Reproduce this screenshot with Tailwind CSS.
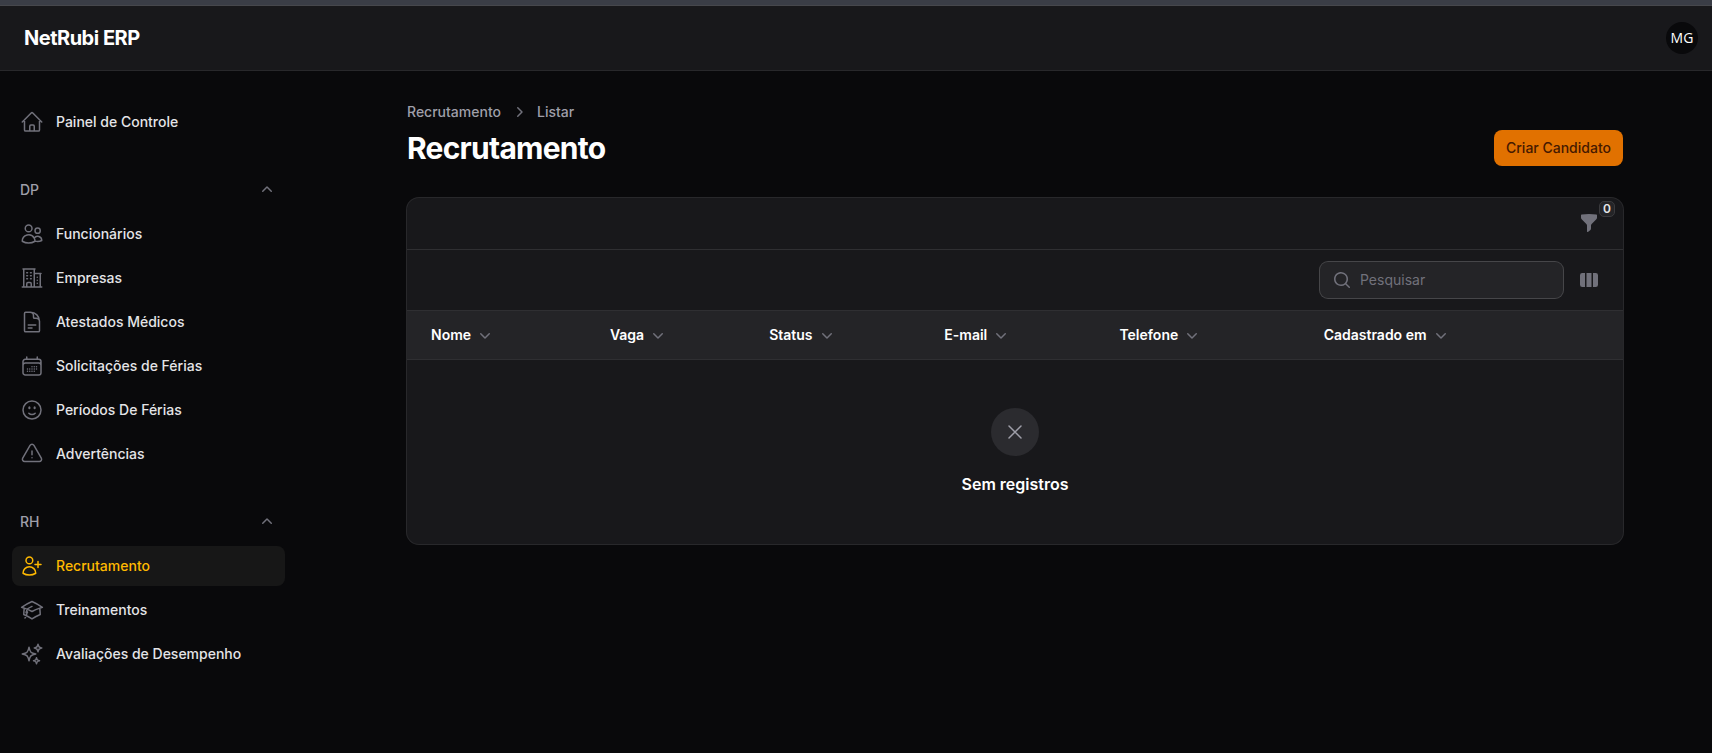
<!DOCTYPE html>
<html lang="pt-BR">
<head>
    <meta charset="UTF-8">
    <meta name="viewport" content="width=device-width, initial-scale=1.0">
    <title>Recrutamento - NetRubi ERP</title>
    <script src="https://cdn.jsdelivr.net/npm/@tailwindcss/browser@4"></script>
</head>
<body class="min-h-screen bg-[#09090b] font-['Inter',sans-serif] text-sm text-white antialiased">

    <!-- Icons -->
    <svg class="hidden">
        <defs>
            <symbol id="i-home" viewBox="0 0 24 24"><path d="m2.25 12 8.954-8.955c.44-.439 1.152-.439 1.591 0L21.75 12M4.5 9.75v10.125c0 .621.504 1.125 1.125 1.125H9.75v-4.875c0-.621.504-1.125 1.125-1.125h2.25c.621 0 1.125.504 1.125 1.125V21h4.125c.621 0 1.125-.504 1.125-1.125V9.75M8.25 21h8.25"/></symbol>
            <symbol id="i-users" viewBox="0 0 24 24"><path d="M15 19.128a9.38 9.38 0 0 0 2.625.372 9.337 9.337 0 0 0 4.121-.952 4.125 4.125 0 0 0-7.533-2.493M15 19.128v-.003c0-1.113-.285-2.16-.786-3.07M15 19.128v.106A12.318 12.318 0 0 1 8.624 21c-2.331 0-4.512-.645-6.374-1.766l-.001-.109a6.375 6.375 0 0 1 11.964-3.07M12 6.375a3.375 3.375 0 1 1-6.75 0 3.375 3.375 0 0 1 6.75 0Zm8.25 2.25a2.625 2.625 0 1 1-5.25 0 2.625 2.625 0 0 1 5.25 0Z"/></symbol>
            <symbol id="i-office" viewBox="0 0 24 24"><path d="M2.25 21h19.5m-18-18v18m10.5-18v18m6-13.5V21M6.75 6.75h.75m-.75 3h.75m-.75 3h.75m3-6h.75m-.75 3h.75m-.75 3h.75M6.75 21v-3.375c0-.621.504-1.125 1.125-1.125h2.25c.621 0 1.125.504 1.125 1.125V21M3 3h12m-.75 4.5H21m-3.75 3.75h.008v.008h-.008v-.008Zm0 3h.008v.008h-.008v-.008Zm0 3h.008v.008h-.008v-.008Z"/></symbol>
            <symbol id="i-document" viewBox="0 0 24 24"><path d="M19.5 14.25v-2.625a3.375 3.375 0 0 0-3.375-3.375h-1.5A1.125 1.125 0 0 1 13.5 7.125v-1.5a3.375 3.375 0 0 0-3.375-3.375H8.25m0 12.75h7.5m-7.5 3H12M10.5 2.25H5.625c-.621 0-1.125.504-1.125 1.125v17.25c0 .621.504 1.125 1.125 1.125h12.75c.621 0 1.125-.504 1.125-1.125V11.25a9 9 0 0 0-9-9Z"/></symbol>
            <symbol id="i-calendar" viewBox="0 0 24 24"><path d="M6.75 3v2.25M17.25 3v2.25M3 18.75V7.5a2.25 2.25 0 0 1 2.25-2.25h13.5A2.25 2.25 0 0 1 21 7.5v11.25m-18 0A2.25 2.25 0 0 0 5.25 21h13.5A2.25 2.25 0 0 0 21 18.75m-18 0v-7.5A2.25 2.25 0 0 1 5.25 9h13.5A2.25 2.25 0 0 1 21 11.25v7.5m-9-6h.008v.008H12v-.008ZM12 15h.008v.008H12V15Zm0 2.25h.008v.008H12v-.008ZM9.75 15h.008v.008H9.75V15Zm0 2.25h.008v.008H9.75v-.008ZM7.5 15h.008v.008H7.5V15Zm0 2.25h.008v.008H7.5v-.008Zm6.75-4.5h.008v.008h-.008v-.008Zm0 2.25h.008v.008h-.008V15Zm0 2.25h.008v.008h-.008v-.008Zm2.25-4.5h.008v.008H16.5v-.008Zm0 2.25h.008v.008H16.5V15Z"/></symbol>
            <symbol id="i-smile" viewBox="0 0 24 24"><path d="M15.182 15.182a4.5 4.5 0 0 1-6.364 0M21 12a9 9 0 1 1-18 0 9 9 0 0 1 18 0ZM9.75 9.75c0 .414-.168.75-.375.75S9 10.164 9 9.75 9.168 9 9.375 9s.375.336.375.75Zm-.375 0h.008v.015h-.008V9.75Zm5.625 0c0 .414-.168.75-.375.75s-.375-.336-.375-.75.168-.75.375-.75.375.336.375.75Zm-.375 0h.008v.015h-.008V9.75Z"/></symbol>
            <symbol id="i-warning" viewBox="0 0 24 24"><path d="M12 9v3.75m-9.303 3.376c-.866 1.5.217 3.374 1.948 3.374h14.71c1.73 0 2.813-1.874 1.948-3.374L13.949 3.378c-.866-1.5-3.032-1.5-3.898 0L2.697 16.126ZM12 15.75h.007v.008H12v-.008Z"/></symbol>
            <symbol id="i-user-plus" viewBox="0 0 24 24"><path d="M18 7.5v3m0 0v3m0-3h3m-3 0h-3m-2.25-4.125a3.375 3.375 0 1 1-6.75 0 3.375 3.375 0 0 1 6.75 0ZM3 19.235v-.11a6.375 6.375 0 0 1 12.75 0v.109A12.318 12.318 0 0 1 9.374 21c-2.331 0-4.512-.645-6.374-1.766Z"/></symbol>
            <symbol id="i-academic" viewBox="0 0 24 24"><path d="M4.26 10.147a60.438 60.438 0 0 0-.491 6.347A48.62 48.62 0 0 1 12 20.904a48.62 48.62 0 0 1 8.232-4.41 60.46 60.46 0 0 0-.491-6.347m-15.482 0a50.636 50.636 0 0 0-2.658-.813A59.906 59.906 0 0 1 12 3.493a59.903 59.903 0 0 1 10.399 5.84c-.896.248-1.783.52-2.658.814m-15.482 0A50.717 50.717 0 0 1 12 13.489a50.702 50.702 0 0 1 7.74-3.342M6.75 15a.75.75 0 1 0 0-1.5.75.75 0 0 0 0 1.5Zm0 0v-3.675A55.378 55.378 0 0 1 12 8.443m-7.007 11.55A5.981 5.981 0 0 0 6.75 15.75v-1.5"/></symbol>
            <symbol id="i-sparkles" viewBox="0 0 24 24"><path d="M9.813 15.904 9 18.75l-.813-2.846a4.5 4.5 0 0 0-3.09-3.09L2.25 12l2.846-.813a4.5 4.5 0 0 0 3.09-3.09L9 5.25l.813 2.846a4.5 4.5 0 0 0 3.09 3.09L15.75 12l-2.846.813a4.5 4.5 0 0 0-3.09 3.09ZM18.259 8.715 18 9.75l-.259-1.035a3.375 3.375 0 0 0-2.455-2.456L14.25 6l1.036-.259a3.375 3.375 0 0 0 2.455-2.456L18 2.25l.259 1.035a3.375 3.375 0 0 0 2.456 2.456L21.75 6l-1.035.259a3.375 3.375 0 0 0-2.456 2.456ZM16.894 20.567 16.5 21.75l-.394-1.183a2.25 2.25 0 0 0-1.423-1.423L13.5 18.75l1.183-.394a2.25 2.25 0 0 0 1.423-1.423l.394-1.183.394 1.183a2.25 2.25 0 0 0 1.423 1.423l1.183.394-1.183.394a2.25 2.25 0 0 0-1.423 1.423Z"/></symbol>
            <symbol id="i-search" viewBox="0 0 20 20"><path fill-rule="evenodd" d="M9 3.5a5.5 5.5 0 1 0 0 11 5.5 5.5 0 0 0 0-11ZM2 9a7 7 0 1 1 12.452 4.391l3.328 3.329a.75.75 0 1 1-1.06 1.06l-3.329-3.328A7 7 0 0 1 2 9Z" clip-rule="evenodd"/></symbol>
            <symbol id="i-chevron-down" viewBox="0 0 20 20"><path fill-rule="evenodd" d="M5.22 8.22a.75.75 0 0 1 1.06 0L10 11.94l3.72-3.72a.75.75 0 1 1 1.06 1.06l-4.25 4.25a.75.75 0 0 1-1.06 0L5.22 9.28a.75.75 0 0 1 0-1.06Z" clip-rule="evenodd"/></symbol>
            <symbol id="i-chevron-up" viewBox="0 0 20 20"><path fill-rule="evenodd" d="M9.47 6.47a.75.75 0 0 1 1.06 0l4.25 4.25a.75.75 0 1 1-1.06 1.06L10 8.06l-3.72 3.72a.75.75 0 0 1-1.06-1.06l4.25-4.25Z" clip-rule="evenodd"/></symbol>
            <symbol id="i-chevron-right" viewBox="0 0 20 20"><path fill-rule="evenodd" d="M8.22 5.22a.75.75 0 0 1 1.06 0l4.25 4.25a.75.75 0 0 1 0 1.06l-4.25 4.25a.75.75 0 0 1-1.06-1.06L11.94 10 8.22 6.28a.75.75 0 0 1 0-1.06Z" clip-rule="evenodd"/></symbol>
            <symbol id="i-funnel" viewBox="0 0 20 20"><path fill-rule="evenodd" d="M2.628 1.601C5.028 1.206 7.49 1 10 1s4.973.206 7.372.601a.75.75 0 0 1 .628.74v2.288a2.25 2.25 0 0 1-.659 1.59l-4.682 4.683a2.25 2.25 0 0 0-.659 1.59v3.037c0 .684-.31 1.33-.844 1.757l-1.937 1.55A.75.75 0 0 1 8 18.25v-5.757a2.25 2.25 0 0 0-.659-1.591L2.659 6.22A2.25 2.25 0 0 1 2 4.629V2.34a.75.75 0 0 1 .628-.74Z" clip-rule="evenodd"/></symbol>
            <symbol id="i-columns" viewBox="0 0 20 20"><path d="M14 17h2.75A2.25 2.25 0 0 0 19 14.75v-9.5A2.25 2.25 0 0 0 16.75 3H14v14ZM12.5 3h-5v14h5V3ZM3.25 3H6v14H3.25A2.25 2.25 0 0 1 1 14.75v-9.5A2.25 2.25 0 0 1 3.25 3Z"/></symbol>
            <symbol id="i-x" viewBox="0 0 24 24"><path d="M6 18 18 6M6 6l12 12"/></symbol>
        </defs>
    </svg>

    <!-- Topbar -->
    <div class="h-[6px] border-b border-[#46474c] bg-[#3a3d46]"></div>
    <header class="flex h-16 items-center justify-between bg-[#18181b] pr-[14px] pl-6 shadow-[0_1px_0_#28282b]">
        <a href="#" class="text-xl leading-5 font-bold tracking-tight">NetRubi ERP</a>
        <button type="button" aria-label="Menu do usuário" class="size-8 rounded-full bg-[#09090b] font-['Open_Sans',sans-serif] text-sm font-normal">MG</button>
    </header>

    <div class="flex">
        <!-- Sidebar -->
        <aside class="w-80 shrink-0 pt-8 pr-[35px] pb-8 pl-3">
            <nav class="flex flex-col gap-7 font-medium text-zinc-200">
                <a href="#" class="flex h-10 items-center gap-3 rounded-lg px-2">
                    <svg class="size-6 fill-none stroke-zinc-500 stroke-[1.5] [stroke-linecap:round] [stroke-linejoin:round]"><use href="#i-home"/></svg>
                    Painel de Controle
                </a>

                <div class="flex flex-col gap-1">
                    <button type="button" class="flex h-10 items-center justify-between px-2 text-zinc-400">
                        DP
                        <svg class="size-5 fill-zinc-500"><use href="#i-chevron-up"/></svg>
                    </button>
                    <a href="#" class="flex h-10 items-center gap-3 rounded-lg px-2">
                        <svg class="size-6 fill-none stroke-zinc-500 stroke-[1.5] [stroke-linecap:round] [stroke-linejoin:round]"><use href="#i-users"/></svg>
                        Funcionários
                    </a>
                    <a href="#" class="flex h-10 items-center gap-3 rounded-lg px-2">
                        <svg class="size-6 fill-none stroke-zinc-500 stroke-[1.5] [stroke-linecap:round] [stroke-linejoin:round]"><use href="#i-office"/></svg>
                        Empresas
                    </a>
                    <a href="#" class="flex h-10 items-center gap-3 rounded-lg px-2">
                        <svg class="size-6 fill-none stroke-zinc-500 stroke-[1.5] [stroke-linecap:round] [stroke-linejoin:round]"><use href="#i-document"/></svg>
                        Atestados Médicos
                    </a>
                    <a href="#" class="flex h-10 items-center gap-3 rounded-lg px-2">
                        <svg class="size-6 fill-none stroke-zinc-500 stroke-[1.5] [stroke-linecap:round] [stroke-linejoin:round]"><use href="#i-calendar"/></svg>
                        Solicitações de Férias
                    </a>
                    <a href="#" class="flex h-10 items-center gap-3 rounded-lg px-2">
                        <svg class="size-6 fill-none stroke-zinc-500 stroke-[1.5] [stroke-linecap:round] [stroke-linejoin:round]"><use href="#i-smile"/></svg>
                        Períodos De Férias
                    </a>
                    <a href="#" class="flex h-10 items-center gap-3 rounded-lg px-2">
                        <svg class="size-6 fill-none stroke-zinc-500 stroke-[1.5] [stroke-linecap:round] [stroke-linejoin:round]"><use href="#i-warning"/></svg>
                        Advertências
                    </a>
                </div>

                <div class="flex flex-col gap-1">
                    <button type="button" class="flex h-10 items-center justify-between px-2 text-zinc-400">
                        RH
                        <svg class="size-5 fill-zinc-500"><use href="#i-chevron-up"/></svg>
                    </button>
                    <a href="#" aria-current="page" class="flex h-10 items-center gap-3 rounded-lg bg-[#171717] px-2 text-[#ffb900]">
                        <svg class="size-6 fill-none stroke-[#ffb900] stroke-[1.5] [stroke-linecap:round] [stroke-linejoin:round]"><use href="#i-user-plus"/></svg>
                        Recrutamento
                    </a>
                    <a href="#" class="flex h-10 items-center gap-3 rounded-lg px-2">
                        <svg class="size-6 fill-none stroke-zinc-500 stroke-[1.5] [stroke-linecap:round] [stroke-linejoin:round]"><use href="#i-academic"/></svg>
                        Treinamentos
                    </a>
                    <a href="#" class="flex h-10 items-center gap-3 rounded-lg px-2">
                        <svg class="size-6 fill-none stroke-zinc-500 stroke-[1.5] [stroke-linecap:round] [stroke-linejoin:round]"><use href="#i-sparkles"/></svg>
                        Avaliações de Desempenho
                    </a>
                </div>
            </nav>
        </aside>

        <!-- Content -->
        <main class="flex-1 pr-[2px]">
            <div class="mx-auto flex max-w-7xl flex-col gap-8 px-8 py-8">
                <div class="flex items-end justify-between">
                    <div>
                        <nav aria-label="Breadcrumb" class="mb-2 flex items-center gap-2 font-medium text-zinc-400">
                            <a href="#">Recrutamento</a>
                            <svg class="size-5 fill-zinc-500"><use href="#i-chevron-right"/></svg>
                            <a href="#">Listar</a>
                        </nav>
                        <h1 class="text-3xl leading-9 font-bold tracking-tight">Recrutamento</h1>
                    </div>
                    <button type="button" class="h-9 rounded-lg bg-[#e17100] px-3 font-medium text-[#461901]">Criar Candidato</button>
                </div>

                <section class="rounded-xl bg-[#18181b] shadow-[0_0_0_1px_#28282b]">
                    <div class="flex h-13 items-start justify-end border-b border-[#2f2f32] px-6 pt-[15px]">
                        <button type="button" aria-label="Filtrar" class="relative">
                            <svg class="size-5 fill-zinc-500"><use href="#i-funnel"/></svg>
                            <span class="absolute -top-3 left-full size-4 rounded-[5px] border border-[#3a3a3d] bg-[#242427] text-center text-xs leading-[14px] font-semibold text-zinc-200">0</span>
                        </button>
                    </div>

                    <div class="flex items-center justify-end gap-4 border-b border-[#2f2f32] px-6 py-3">
                        <label class="flex h-9 w-[243px] items-center gap-2 rounded-lg bg-[#242427] px-3 shadow-[0_0_0_1px_#464649]">
                            <svg class="size-5 shrink-0 fill-zinc-500"><use href="#i-search"/></svg>
                            <input type="search" aria-label="Pesquisar" placeholder="Pesquisar" class="w-full min-w-0 bg-transparent outline-none placeholder:text-zinc-500">
                        </label>
                        <button type="button" aria-label="Colunas">
                            <svg class="size-5 fill-zinc-500"><use href="#i-columns"/></svg>
                        </button>
                    </div>

                    <table class="w-full table-fixed text-left">
                        <thead class="border-b border-[#2f2f32] bg-[#242427]">
                            <tr class="h-12">
                                <th class="w-[15.7%] pr-3 pl-6 font-semibold"><button type="button" class="flex items-center gap-1">Nome <svg class="size-5 fill-zinc-500"><use href="#i-chevron-down"/></svg></button></th>
                                <th class="w-[13.1%] px-3 font-semibold"><button type="button" class="flex items-center gap-1">Vaga <svg class="size-5 fill-zinc-500"><use href="#i-chevron-down"/></svg></button></th>
                                <th class="w-[14.4%] px-3 font-semibold"><button type="button" class="flex items-center gap-1">Status <svg class="size-5 fill-zinc-500"><use href="#i-chevron-down"/></svg></button></th>
                                <th class="w-[14.4%] px-3 font-semibold"><button type="button" class="flex items-center gap-1">E-mail <svg class="size-5 fill-zinc-500"><use href="#i-chevron-down"/></svg></button></th>
                                <th class="w-[16.8%] px-3 font-semibold"><button type="button" class="flex items-center gap-1">Telefone <svg class="size-5 fill-zinc-500"><use href="#i-chevron-down"/></svg></button></th>
                                <th class="px-3 font-semibold"><button type="button" class="flex items-center gap-1">Cadastrado em <svg class="size-5 fill-zinc-500"><use href="#i-chevron-down"/></svg></button></th>
                            </tr>
                        </thead>
                    </table>

                    <div class="flex flex-col items-center gap-4 py-12">
                        <div class="rounded-full bg-[#2b2b2f] p-3">
                            <svg class="size-6 fill-none stroke-zinc-400 stroke-[1.5] [stroke-linecap:round] [stroke-linejoin:round]"><use href="#i-x"/></svg>
                        </div>
                        <h2 class="text-base font-semibold">Sem registros</h2>
                    </div>
                </section>
            </div>
        </main>
    </div>

</body>
</html>
